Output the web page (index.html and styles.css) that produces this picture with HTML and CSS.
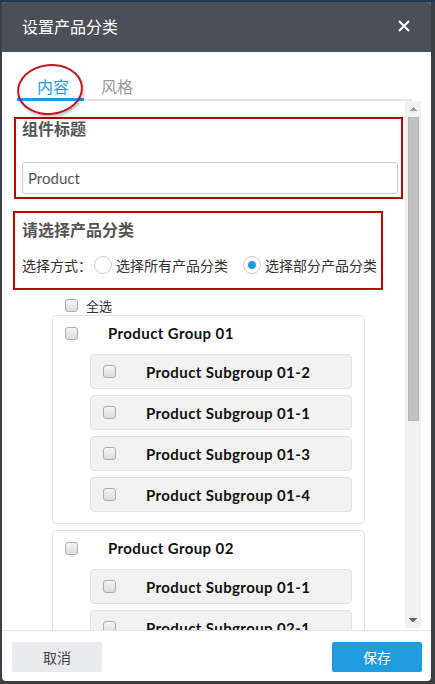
FILE: index.html
```html
<!DOCTYPE html>
<html lang="zh-CN">
<head>
    <meta charset="UTF-8">
    <meta name="viewport" content="width=device-width, initial-scale=1.0">
    <title>设置产品分类</title>
    <link rel="stylesheet" href="styles.css">
</head>
<body>
    <div class="modal">
        <div class="modal-header">
            <span class="modal-title">设置产品分类</span>
            <span class="close-btn">
                <svg width="12" height="12" viewBox="0 0 12 12"><path d="M1 1L11 11M11 1L1 11" stroke="#fff" stroke-width="2"/></svg>
            </span>
        </div>

        <div class="tabs">
            <span class="tab active">内容</span>
            <span class="tab">风格</span>
            <!-- 标注圈 -->
            <span class="mark-ellipse"></span>
        </div>

        <div class="modal-body">
            <div class="body-content">
                <div class="section box-title">
                    <div class="section-title">组件标题</div>
                    <input class="text-input" type="text" value="Product">
                </div>

                <div class="section box-category">
                    <div class="section-title">请选择产品分类</div>
                    <div class="radio-row">
                        <span>选择方式：</span>
                        <span class="radio"><span class="radio-circle"></span>选择所有产品分类</span>
                        <span class="radio checked"><span class="radio-circle"></span>选择部分产品分类</span>
                    </div>
                </div>

                <div class="select-all"><span class="checkbox"></span>全选</div>

                <div class="group">
                    <div class="group-head"><span class="checkbox"></span>Product Group 01</div>
                    <div class="sub-list">
                        <div class="sub-item"><span class="checkbox"></span>Product Subgroup 01-2</div>
                        <div class="sub-item"><span class="checkbox"></span>Product Subgroup 01-1</div>
                        <div class="sub-item"><span class="checkbox"></span>Product Subgroup 01-3</div>
                        <div class="sub-item"><span class="checkbox"></span>Product Subgroup 01-4</div>
                    </div>
                </div>

                <div class="group">
                    <div class="group-head"><span class="checkbox"></span>Product Group 02</div>
                    <div class="sub-list">
                        <div class="sub-item"><span class="checkbox"></span>Product Subgroup 01-1</div>
                        <div class="sub-item"><span class="checkbox"></span>Product Subgroup 02-1</div>
                        <div class="sub-item"><span class="checkbox"></span>Product Subgroup 02-2</div>
                        <div class="sub-item"><span class="checkbox"></span>Product Subgroup 02-3</div>
                    </div>
                </div>
            </div>

            <!-- 滚动条 -->
            <div class="scrollbar">
                <span class="scroll-btn up"></span>
                <div class="scroll-track"><div class="scroll-thumb"></div></div>
                <span class="scroll-btn down"></span>
            </div>
        </div>

        <div class="modal-footer">
            <button class="btn btn-cancel">取消</button>
            <button class="btn btn-save">保存</button>
        </div>
    </div>
</body>
</html>
```

FILE: styles.css
```css
html, body {
    margin: 0;
    height: 100%;
}
body {
    font-family: Lato, "Noto Sans CJK SC", sans-serif;
    background: linear-gradient(#1f3a55 0 2px, #3b3e44 2px);
    overflow: hidden;
}
.modal {
    margin: 2px 4px 0 2px;
    height: 679px;
    background-color: #fff;
    border-radius: 4px;
    overflow: hidden;
    display: flex;
    flex-direction: column;
}

/* 头部 */
.modal-header {
    height: 50px;
    flex: none;
    background-color: #4b4f57;
    display: flex;
    align-items: center;
    justify-content: space-between;
    padding: 0 21px 2px 20px;
    box-sizing: border-box;
}
.modal-title {
    color: #fff;
    font-size: 16px;
}
.close-btn {
    display: flex;
    cursor: pointer;
}

/* 标签页 */
.tabs {
    position: relative;
    z-index: 2;
    flex: none;
    height: 49px;
    margin: 0 19px 0 15px;
    border-bottom: 2px solid #e6e6e6;
    box-sizing: border-box;
    display: flex;
    align-items: flex-end;
}
.tab {
    font-size: 16px;
    line-height: 20px;
    color: #999;
    padding: 0 15px 1px 17px;
    margin-bottom: -2px;
    border-bottom: 3px solid transparent;
}
.tab.active {
    color: #1e9be0;
    padding-left: 20px;
    border-bottom-color: #1e9be0;
}
.mark-ellipse {
    position: absolute;
    left: 0;
    top: 12px;
    width: 66px;
    height: 51px;
    border: 2px solid #c3161c;
    border-radius: 50%;
    box-sizing: border-box;
    transform: rotate(-6deg);
    box-shadow: 1px 2px 3px rgba(0, 0, 0, 0.25);
}

/* 内容区 */
.modal-body {
    flex: none;
    height: 529px;
    margin: 0 10px;
    display: flex;
}
.body-content {
    flex: 1;
    overflow: hidden;
}
.scrollbar {
    flex: none;
    width: 16px;
    margin-bottom: 2px;
    background-color: #f1f1f1;
    display: flex;
    flex-direction: column;
}
.scroll-btn {
    flex: none;
    height: 16px;
    background: conic-gradient(from 135deg at 50% 0, #a3a3a3 90deg, transparent 0) 50% 50% / 8px 4px no-repeat;
}
.scroll-btn.down {
    background: conic-gradient(from -45deg at 50% 100%, #6a6a6a 90deg, transparent 0) 50% 50% / 8px 4px no-repeat;
}
.scroll-track {
    flex: 1;
}
.scroll-thumb {
    height: 304px;
    margin: 0 2px 0 3px;
    background-color: #c1c1c1;
    border: 1px solid #b4b4b4;
    box-sizing: border-box;
}

.section {
    border: 2px solid #c00000;
    box-sizing: border-box;
}
.section-title {
    font-size: 16px;
    font-weight: bold;
    line-height: 20px;
    color: #555;
}
.box-title {
    margin: 16px 0 0 2px;
    width: 389px;
    padding: 0 3px 3px 6px;
}
.text-input {
    display: block;
    margin-top: 23px;
    width: 376px;
    height: 32px;
    box-sizing: border-box;
    border: 1px solid #ccc;
    border-radius: 3px;
    padding: 0 5px;
    font-family: Lato, sans-serif;
    font-size: 15px;
    color: #555;
    outline: none;
}
.box-category {
    margin: 12px 0 0 1px;
    width: 370px;
    padding: 7px 0 13px 7px;
}
.radio-row {
    margin-top: 15px;
    display: flex;
    align-items: center;
    height: 20px;
    font-size: 14px;
    color: #333;
}
.radio {
    display: flex;
    align-items: center;
    gap: 4px;
    margin-left: 2px;
}
.radio + .radio {
    margin-left: 15px;
}
.radio-circle {
    width: 18px;
    height: 18px;
    box-sizing: border-box;
    border: 1px solid #ccc;
    border-radius: 50%;
    background-color: #fff;
    display: flex;
    align-items: center;
    justify-content: center;
}
.radio.checked .radio-circle::after {
    content: "";
    width: 8px;
    height: 8px;
    border-radius: 50%;
    background-color: #1e9be0;
}

/* 复选框 */
.checkbox {
    flex: none;
    width: 13px;
    height: 13px;
    box-sizing: border-box;
    border: 1px solid #adadad;
    border-radius: 3px;
    background: linear-gradient(#f6f6f6, #dcdcdc);
}
.select-all {
    display: flex;
    align-items: center;
    gap: 8px;
    margin-top: 6px;
    padding-left: 53px;
    height: 18px;
    font-size: 13px;
    color: #333;
}

/* 分组 */
.group {
    margin: 6px 0 0 40px;
    width: 313px;
    border: 1px solid #e3e3e3;
    border-radius: 4px;
    padding: 0 12px 11px 0;
    box-sizing: border-box;
}
.select-all + .group {
    margin-top: 1px;
}
.group-head {
    display: flex;
    align-items: center;
    height: 34px;
    margin-bottom: 4px;
    padding-left: 12px;
    font-size: 15px;
    font-weight: bold;
    letter-spacing: 0.4px;
    color: #111;
}
.group-head .checkbox,
.sub-item .checkbox {
    margin-right: 30px;
}
.sub-list {
    margin-left: 37px;
    display: flex;
    flex-direction: column;
    gap: 6px;
}
.sub-item {
    display: flex;
    align-items: center;
    height: 35px;
    box-sizing: border-box;
    padding-left: 12px;
    background-color: #f2f2f2;
    border: 1px solid #e2e2e2;
    border-radius: 4px;
    font-size: 15px;
    font-weight: bold;
    letter-spacing: 0.4px;
    color: #111;
}

/* 底部 */
.modal-footer {
    flex: none;
    border-top: 1px solid #e6e6e6;
    padding: 11px 9px 9px 10px;
    display: flex;
    justify-content: space-between;
}
.btn {
    width: 90px;
    height: 30px;
    border: none;
    border-radius: 2px;
    font-family: "Noto Sans CJK SC", sans-serif;
    font-size: 14px;
    cursor: pointer;
}
.btn-cancel {
    background-color: #e9ebee;
    color: #444;
}
.btn-save {
    background-color: #1f9ce0;
    color: #fff;
}
```
